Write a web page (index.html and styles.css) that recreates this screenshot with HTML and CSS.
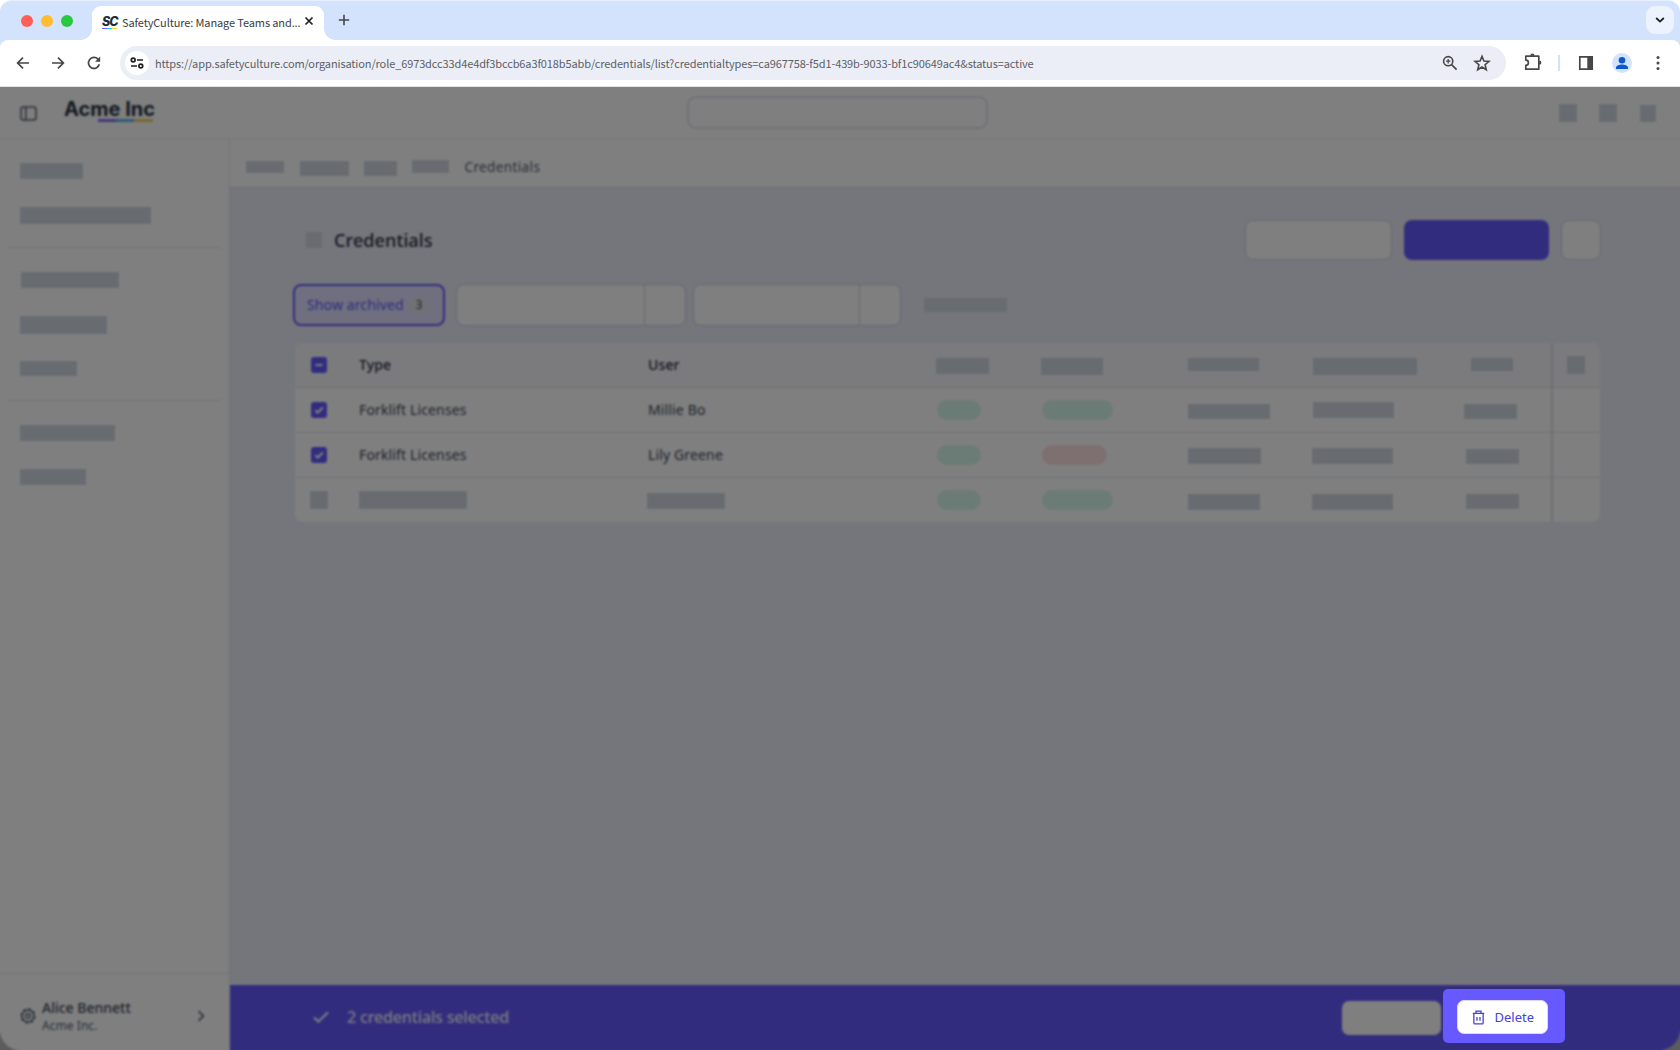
FILE: index.html
```html
<!DOCTYPE html>
<html lang="en">
<head>
<meta charset="utf-8">
<title>SafetyCulture: Manage Teams and Credentials</title>
<link rel="stylesheet" href="styles.css">
</head>
<body>
<div class="window">
  <header class="tabstrip">
    <div class="lights"><i class="light red"></i><i class="light yellow"></i><i class="light green"></i></div>
    <div class="tab">
      <span class="favicon"><b>SC</b><i></i></span>
      <span class="tab-title">SafetyCulture: Manage Teams and...</span>
      <svg class="tab-close" viewBox="0 0 10 10"><path d="M1.5 1.5l7 7M8.500 1.500l-7 7" stroke="#1f1f1f" stroke-width="1.700"/></svg>
    </div>
    <svg class="new-tab" viewBox="0 0 12 12"><path d="M6 .8v10.400M.8 6h10.400" stroke="#474747" stroke-width="1.600"/></svg>
    <div class="tab-menu"><svg viewBox="0 0 10 6"><path d="M1.200 1l3.800 3.600L8.800 1" fill="none" stroke="#1f1f1f" stroke-width="1.800"/></svg></div>
  </header>
  <div class="toolbar">
    <svg class="nav" viewBox="0 0 14 14"><path d="M13 7H1.800M7 1.600L1.600 7 7 12.400" fill="none" stroke="#474747" stroke-width="1.700"/></svg>
    <svg class="nav" viewBox="0 0 14 14"><path d="M1 7h11.200M7 1.600L12.400 7 7 12.400" fill="none" stroke="#474747" stroke-width="1.700"/></svg>
    <svg class="nav reload" viewBox="0 0 14 14"><path d="M12.300 8.300A5.500 5.500 0 1 1 11 3.200l1.300 1.500" fill="none" stroke="#474747" stroke-width="1.700"/><path d="M13.200.5v5.200H8z" fill="#474747"/></svg>
    <div class="omnibox">
      <span class="site-info"><svg viewBox="0 0 14 12"><g fill="none" stroke="#1f1f1f" stroke-width="1.700"><circle cx="3.200" cy="3" r="1.900"/><path d="M7 3h6M1 9h6"/><circle cx="10.800" cy="9" r="1.900"/></g></svg></span>
      <span class="url">https://app.safetyculture.com/organisation/role_6973dcc33d4e4df3bccb6a3f018b5abb/credentials/list?credentialtypes=ca967758-f5d1-439b-9033-bf1c90649ac4&amp;status=active</span>
      <svg class="mag" viewBox="0 0 16 16"><g fill="none" stroke="#474747" stroke-width="1.600"><circle cx="6.200" cy="6.200" r="4.600"/><path d="M9.600 9.600l5 5"/><path d="M6.200 4v4.400M4 6.200h4.400" stroke-width="1.300"/></g></svg>
      <svg class="star" viewBox="0 0 18 18"><path d="M9 2.300l1.900 4.700 5.100.4-3.900 3.300 1.200 5L9 13l-4.300 2.700 1.200-5L2 7.400 7.100 7z" fill="none" stroke="#474747" stroke-width="1.600"/></svg>
    </div>
    <svg class="puzzle" viewBox="0 0 20 20"><path d="M2.800 4.200h13V17.200h-13V13.300a2.600 2.600 0 0 0 0-5.200z" fill="none" stroke="#474747" stroke-width="1.700" stroke-linejoin="round"/><path d="M7.300 3.800a2.100 2.300 0 0 1 4.200 0zM16.200 8.600a2.200 2.100 0 0 1 0 4.200z" fill="#474747"/></svg>
    <i class="split"></i>
    <svg class="panel" viewBox="0 0 16 16"><path d="M1.800 1.800h12.400v12.400H1.800z" fill="none" stroke="#474747" stroke-width="1.700"/><path d="M9.300 1.500h5v13h-5z" fill="#474747"/></svg>
    <span class="avatar"><svg viewBox="0 0 20 20"><circle cx="10" cy="7.300" r="3.300" fill="#0b57d0"/><path d="M4 16v-1.300c0-2 3.400-3.200 6-3.200s6 1.200 6 3.200V16z" fill="#0b57d0"/></svg></span>
    <svg class="dots" viewBox="0 0 4 16"><g fill="#474747"><circle cx="2" cy="2.500" r="1.500"/><circle cx="2" cy="8" r="1.500"/><circle cx="2" cy="13.500" r="1.500"/></g></svg>
  </div>

  <div class="viewport">
    <div class="app">
      <header class="topbar">
        <svg class="side-toggle" viewBox="0 0 17 15"><g fill="none" stroke="#545f70" stroke-width="1.500"><rect x="1" y="1" width="15" height="13" rx="2.500"/><path d="M5.800 1v13"/></g></svg>
        <div class="brand"><b>Acme Inc</b><i></i></div>
        <div class="search"></div>
        <div class="actions"><i class="bar"></i><i class="bar"></i><i class="bar"></i></div>
      </header>
      <div class="body">
        <aside class="sidebar">
          <nav>
            <div class="group g1"><i class="bar"></i><i class="bar"></i></div>
            <div class="group g2"><i class="bar"></i><i class="bar"></i><i class="bar"></i></div>
            <div class="group g3"><i class="bar"></i><i class="bar"></i></div>
          </nav>
          <div class="account">
            <svg class="gear" viewBox="0 0 16 16"><g fill="none" stroke="#545f70"><circle cx="8" cy="8" r="5.900" stroke-width="1.500"/><circle cx="8" cy="8" r="7" stroke-width="1.300" stroke-dasharray="2.750 2.748"/><circle cx="8" cy="8" r="2.300" stroke-width="1.400"/></g></svg>
            <div class="who"><strong>Alice Bennett</strong><span>Acme Inc.</span></div>
            <svg class="chev" viewBox="0 0 8 12"><path d="M1.500 1.200L6.300 6l-4.800 4.800" fill="none" stroke="#545f70" stroke-width="1.700"/></svg>
          </div>
        </aside>
        <main>
          <div class="crumbs"><i class="bar"></i><i class="bar"></i><i class="bar"></i><i class="bar"></i><span>Credentials</span></div>
          <section class="content">
            <div class="heading">
              <i class="bar"></i><h1>Credentials</h1>
              <i class="btn"></i><i class="btn primary"></i><i class="btn small"></i>
            </div>
            <div class="filters">
              <div class="archived"><span>Show archived</span><em>3</em></div>
              <div class="select s1"><i></i></div>
              <div class="select s2"><i></i></div>
              <i class="bar"></i>
            </div>
            <div class="table">
              <div class="row head">
                <div><span class="check"><svg viewBox="0 0 16 16"><path d="M4.500 8h7" stroke="#fff" stroke-width="2"/></svg></span></div>
                <div class="txt">Type</div><div class="txt">User</div>
                <div><i class="bar"></i></div><div><i class="bar"></i></div><div><i class="bar"></i></div><div><i class="bar"></i></div><div><i class="bar"></i></div><div class="last"><i class="bar"></i></div>
              </div>
              <div class="row r1">
                <div><span class="check"><svg viewBox="0 0 16 16"><path d="M4.300 8.200l2.500 2.300 5-5" fill="none" stroke="#fff" stroke-width="2"/></svg></span></div>
                <div class="txt">Forklift Licenses</div><div class="txt">Millie Bo</div>
                <div><i class="pill"></i></div><div><i class="pill long"></i></div><div><i class="bar"></i></div><div><i class="bar"></i></div><div><i class="bar"></i></div><div class="last"></div>
              </div>
              <div class="row r2">
                <div><span class="check"><svg viewBox="0 0 16 16"><path d="M4.300 8.200l2.500 2.300 5-5" fill="none" stroke="#fff" stroke-width="2"/></svg></span></div>
                <div class="txt">Forklift Licenses</div><div class="txt">Lily Greene</div>
                <div><i class="pill"></i></div><div><i class="pill bad"></i></div><div><i class="bar"></i></div><div><i class="bar"></i></div><div><i class="bar"></i></div><div class="last"></div>
              </div>
              <div class="row r3">
                <div><i class="bar"></i></div><div><i class="bar"></i></div><div><i class="bar"></i></div>
                <div><i class="pill"></i></div><div><i class="pill long"></i></div><div><i class="bar"></i></div><div><i class="bar"></i></div><div><i class="bar"></i></div><div class="last"></div>
              </div>
            </div>
          </section>
          <footer class="selection">
            <svg class="tick" viewBox="0 0 16 12"><path d="M1 6.400l4.500 4.200L15 1.200" fill="none" stroke="#fff" stroke-width="2"/></svg>
            <span>2 credentials selected</span>
            <i class="ghost"></i>
          </footer>
        </main>
      </div>
    </div>
    <div class="scrim"></div>
    <div class="spotlight">
      <button class="delete"><svg viewBox="0 0 14 16"><g fill="none" stroke="#4740d4" stroke-width="1.400"><path d="M.8 3.600h12.400M4.300 3.500V1.200h5.400v2.300M2 3.800v10c0 .6.400 1 1 1h8c.6 0 1-.4 1-1v-10M5.400 7.500v4M8.600 7.500v4"/></g></svg>Delete</button>
    </div>
  </div>
</div>
</body>
</html>
```
FILE: styles.css
```css
* { box-sizing: border-box; }
body { margin: 0; background: #fff; font-family: "Noto Sans", sans-serif; }
i, em { font-style: normal; }
svg { display: block; flex: none; }

.window { width: 1680px; height: 1050px; display: flex; flex-direction: column; overflow: hidden; background: #d3e3fd; border-top: 1px solid #e6effd; border-radius: 12px 12px 0 0; }

/* Browser chrome */
.tabstrip { height: 39px; display: flex; align-items: flex-start; padding-left: 21px; }
.lights { display: flex; gap: 8px; margin-top: 13.500px; }
.light { width: 12px; height: 12px; border-radius: 50%; }
.red { background: #ff5f57; }
.yellow { background: #febc2e; }
.green { background: #28c840; }
.tab { position: relative; display: flex; align-items: center; width: 232px; height: 34px; margin: 5px 0 0 19px; padding-left: 10px; background: #fff; border-radius: 9px 9px 0 0; }
.tab::before, .tab::after { content: ""; position: absolute; bottom: 0; width: 11px; height: 11px; }
.tab::before { left: -11px; background: radial-gradient(circle at 0 0, transparent 10.5px, #fff 11px); }
.tab::after { right: -11px; background: radial-gradient(circle at 100% 0, transparent 10.5px, #fff 11px); }
.favicon { width: 17px; height: 13px; display: flex; flex-direction: column; }
.favicon b { height: 11px; font: italic 800 12.500px/10px Inter, sans-serif; letter-spacing: -1px; color: #1d2d3f; }
.favicon i { width: 15px; height: 1.5px; background: linear-gradient(90deg, #6559ff 33%, #00d1ff 33% 66%, #ffd13b 66%); }
.tab-title { width: 179px; margin: -3px 0 0 3px; font: 11px/20px "Noto Sans CJK SC", sans-serif; letter-spacing: -.12px; color: #3c3c3c; white-space: nowrap; }
.tab-close { width: 10px; height: 10px; margin: -5px 0 0 2.500px; }
.new-tab { width: 12px; height: 12px; margin: 13px 0 0 14px; }
.tab-menu { width: 28px; height: 28px; margin: 5px 6px 0 auto; border-radius: 9px; background: #ecf2fe; display: flex; align-items: center; justify-content: center; }
.tab-menu svg { width: 10px; height: 6px; }
.toolbar { height: 47px; display: flex; align-items: center; flex: none; padding-left: 16px; background: #fff; border-bottom: 1px solid #e3e3e3; border-radius: 8px 8px 0 0; }
.nav { width: 14px; height: 14px; margin-right: 21px; }
.nav.reload { margin: 0 19px 0 1px; }
.omnibox { width: 1386px; height: 34px; display: flex; align-items: center; padding: 0 15px 0 5px; border-radius: 17px; background: #eceef7; }
.site-info { width: 24px; height: 24px; border-radius: 50%; background: #fff; display: flex; align-items: center; justify-content: center; }
.site-info svg { width: 14px; height: 12px; }
.url { margin: -1px 0 0 6px; font: 11px/20px "Noto Sans CJK SC", sans-serif; letter-spacing: -.12px; color: #5c5f64; white-space: nowrap; }
.mag { width: 16px; height: 16px; margin-left: auto; }
.star { width: 18px; height: 18px; margin-left: 15px; }
.puzzle { width: 20px; height: 20px; margin: -2px 0 0 17px; }
.split { width: 2px; height: 16px; margin-left: 15px; background: #d3e3fd; }
.panel { width: 16px; height: 16px; margin-left: 18px; }
.avatar { width: 20px; height: 20px; margin-left: 18px; border-radius: 50%; background: #d3e3fd; }
.dots { width: 4px; height: 16px; margin-left: 24px; }

/* Application */
.viewport { position: relative; height: 963px; background: #b9b9b9; }
.app { height: 963px; display: flex; flex-direction: column; background: #fff; border-radius: 0 0 20px 20px; overflow: hidden; }
.scrim { position: absolute; inset: 0; background: rgba(0, 0, 0, .5); backdrop-filter: blur(.9px); }
.bar { flex: none; background: #d0d7e0; }
.topbar { height: 52px; flex: none; display: flex; padding-left: 20px; border-bottom: 1px solid #e9eaf3; }
.side-toggle { width: 17px; height: 15px; margin: 18.500px 0 0 -.5px; }
.brand { width: 92px; margin: 10px 0 0 27.500px; }
.brand b { display: block; height: 22px; font: 700 20px/24px Inter, sans-serif; color: #2a3342; white-space: nowrap; }
.brand i { display: block; width: 55px; height: 2.500px; margin-left: 34px; background: linear-gradient(90deg, #8a6cf0 33%, #5cb5ec 33% 66%, #f0d060 66%); }
.search { width: 301px; height: 33px; margin: 9px 0 0 531px; border: 2px solid #e2e4f1; border-radius: 9px; }
.actions { display: flex; margin: 17px 24px 0 auto; }
.actions .bar { width: 18px; height: 18px; margin-left: 22px; }
.actions .bar:last-child { width: 16px; height: 17px; margin: 1px 0 0 23px; }
.body { flex: 1; display: flex; min-height: 0; }

.sidebar { width: 230px; flex: none; display: flex; flex-direction: column; justify-content: space-between; border-right: 1px solid #e4e6f0; }
.sidebar nav { padding: 0 8px; }
.group { display: flex; flex-direction: column; padding-left: 12px; }
.group + .group { border-top: 1px solid #e3e5eb; }
.g1 { height: 108px; padding-top: 24px; gap: 28px; }
.g1 .bar { width: 63px; height: 16px; }
.g1 .bar:last-child { width: 131px; height: 17px; }
.g2 { height: 153px; padding-top: 24px; gap: 28px; }
.g2 .bar { width: 98px; height: 16px; margin-left: 1px; }
.g2 .bar:nth-child(2) { width: 87px; height: 18px; margin-left: 0; }
.g2 .bar:nth-child(3) { width: 57px; height: 15px; margin: -1px 0 0; }
.g3 { padding-top: 24px; gap: 28px; }
.g3 .bar { width: 95px; height: 16px; }
.g3 .bar:last-child { width: 66px; }
.account { height: 77px; display: flex; align-items: center; padding: 8px 24px 0 20px; border-top: 1px solid #e2e4ee; }
.gear { width: 16px; height: 16px; }
.who { flex: 1; margin-left: 6px; display: flex; flex-direction: column; white-space: nowrap; }
.who strong { font-weight: 500; font-size: 14px; line-height: 18px; color: #3f495a; }
.who span { font-size: 12px; line-height: 17px; color: #545f70; letter-spacing: .05px; }
.chev { width: 8px; height: 12px; }

main { flex: 1; min-width: 0; display: flex; flex-direction: column; background: #eaecf6; }
.crumbs { height: 49px; flex: none; display: flex; align-items: flex-start; padding: 22px 0 0 16px; background: #fff; border-bottom: 1px solid #dfe1ee; }
.crumbs .bar { width: 38px; height: 12px; }
.crumbs .bar:nth-child(2) { width: 49px; height: 15px; margin-left: 16px; }
.crumbs .bar:nth-child(3) { width: 33px; height: 15px; margin-left: 15px; }
.crumbs .bar:nth-child(4) { width: 37px; height: 13px; margin: -1px 0 0 15px; }
.crumbs span { margin: -4px 0 0 15.500px; font-size: 13.500px; line-height: 20px; letter-spacing: .38px; color: #545f70; }
.content { flex: 1; padding: 31px 79px 0 64px; }
.heading { height: 42px; display: flex; align-items: center; padding-left: 12px; }
.heading .bar { width: 16px; height: 16px; }
.heading h1 { margin: 0 auto 0 12px; font-size: 18px; font-weight: 500; line-height: 24px; letter-spacing: .1px; color: #2a3040; }
.btn { width: 147px; height: 40px; margin-left: 11px; border: 1px solid #cdd1de; border-radius: 8px; background: #fff; }
.btn.primary { width: 145px; height: 40px; margin-left: 12px; background: #6559ff; border: 0; }
.btn.small { width: 40px; margin-left: 12px; }
.filters { height: 43px; display: flex; align-items: center; margin-top: 22px; }
.archived { width: 152px; height: 42px; margin-left: -1px; display: flex; align-items: center; padding: 0 12px; border: 2px solid #6559ff; border-radius: 8px; background: #dfdfff; }
.archived span { width: 96px; font-size: 14px; letter-spacing: .12px; color: #6559ff; white-space: nowrap; }
.archived em { width: 20px; height: 20px; margin-left: 6px; border-radius: 10px; background: #dfe4e9; font-size: 12px; line-height: 20px; text-align: center; color: #3f495a; }
.select { height: 42px; display: flex; justify-content: flex-end; border: 1px solid #c9cddb; border-radius: 8px; background: #fff; }
.select i { width: 41px; border-left: 1px solid #c9cddb; }
.s1 { width: 230px; margin-left: 11px; }
.s2 { width: 208px; margin-left: 7px; }
.filters > .bar { width: 83px; height: 14px; margin-left: 23px; }

.table { margin: 17px -1px 0 1px; border-radius: 8px; overflow: hidden; background: #fff; width: 1305px; }
.row { height: 45px; display: grid; grid-template-columns: 64px 289px 288px 106px 146px 125px 151px 87px 49px; border-bottom: 1px solid #e0e2ea; }
.row > div { display: flex; align-items: flex-start; padding-top: 12px; }
.row > div:first-child { padding-left: 16px; }
.row .txt { align-items: center; padding: 0 0 2px; font-size: 14px; letter-spacing: .14px; color: #3f495a; }
.head { background: #f7f7fb; }
.head .txt { font-weight: 500; color: #2a3040; padding-bottom: 2px; }
.row .last { border-left: 2px solid #dcdeea; padding-left: 14px; }
.r3 { border-bottom: 0; height: 44px; }
.check { width: 16px; height: 16px; margin-top: 2px; border-radius: 3px; background: #6559ff; }
.pill { width: 44px; height: 20px; border-radius: 10px; background: #d6f7ea; margin-left: 1px; }
.pill.long { width: 71px; margin-left: 0; }
.pill.bad { width: 65px; margin-left: 0; background: #fcdfe3; }
.row .bar { height: 16px; }
.head > div { padding-top: 15px; }
.head .check { margin-top: -1px; }
.head > :nth-child(4) .bar { width: 53px; }
.head > :nth-child(5) .bar { width: 62px; height: 17px; margin-left: -1px; }
.head > :nth-child(6) .bar { width: 71px; height: 13px; }
.head > :nth-child(7) .bar { width: 104px; height: 17px; }
.head > :nth-child(8) .bar { width: 42px; height: 13px; margin-left: 7px; }
.head > :nth-child(9) .bar { width: 18px; height: 18px; margin-top: -2px; }
.r1 > :nth-child(6) .bar { width: 82px; height: 15px; margin-top: 4px; }
.r1 > :nth-child(7) .bar { width: 81px; margin-top: 2px; }
.r1 > :nth-child(8) .bar { width: 53px; height: 15px; margin-top: 4px; }
.r2 > :nth-child(6) .bar { width: 73px; margin-top: 3px; }
.r2 > :nth-child(7) .bar { width: 81px; margin: 3px 0 0 -1px; }
.r2 > :nth-child(8) .bar { width: 53px; height: 15px; margin: 4px 0 0 1.500px; }
.r3 > :nth-child(1) .bar { width: 18px; height: 18px; margin: 1px 0 0 -1px; }
.r3 > :nth-child(2) .bar { width: 108px; height: 18px; margin-top: 1px; }
.r3 > :nth-child(3) .bar { width: 78px; margin: 3px 0 0 -1px; }
.r3 > :nth-child(6) .bar { width: 72px; margin-top: 4px; }
.r3 > :nth-child(7) .bar { width: 81px; margin: 4px 0 0 -1px; }
.r3 > :nth-child(8) .bar { width: 53px; height: 15px; margin: 4px 0 0 1.500px; }

.selection { height: 65px; flex: none; display: flex; align-items: center; padding: 0 239px 0 83px; background: #6559ff; color: #f0effc; }
.tick { width: 16px; height: 12px; margin-top: -1px; }
.selection span { margin: -1px 0 0 18px; font-size: 16px; font-weight: 500; letter-spacing: -.15px; }
.ghost { width: 99px; height: 34px; margin: 0 0 0 auto; border-radius: 7px; background: #fff; }

.spotlight { position: absolute; left: 1443px; top: 902px; width: 122px; height: 54px; padding: 11px 14px; border-radius: 5px; background: #6559ff; }
.delete { width: 91px; height: 34px; display: flex; align-items: center; padding: 0 14px; border: 1px solid #d9d8f5; border-radius: 7px; background: #fff; font: 13px/20px "Noto Sans", sans-serif; letter-spacing: 0; color: #4740d4; }
.delete svg { width: 13px; height: 15px; margin-right: 9.500px; }
```
